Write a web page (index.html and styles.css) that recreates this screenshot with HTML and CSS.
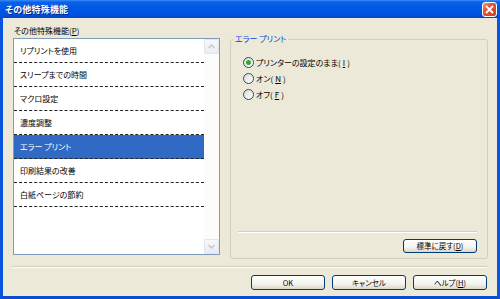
FILE: index.html
```html
<!DOCTYPE html>
<html lang="ja">

<head>
    <meta charset="UTF-8">
    <title>その他特殊機能</title>
    <link rel="stylesheet" href="styles.css">
</head>

<body>
    <div class="window">
        <div class="titlebar">
            <span class="title">その他特殊機能</span>
            <button class="close" aria-label="閉じる">
                <svg width="9" height="9" viewBox="0 0 9 9">
                    <path d="M1 1 L8 8 M8 1 L1 8" stroke="#fff" stroke-width="1.8" />
                </svg>
            </button>
        </div>

        <div class="frame">
            <div class="main">
                <div class="left">
                    <div class="label">その他特殊機能(<u>P</u>)</div>
                    <div class="listbox">
                        <ul class="items">
                            <li>リプリントを使用</li>
                            <li>スリープまでの時間</li>
                            <li>マクロ設定</li>
                            <li>濃度調整</li>
                            <li class="selected">エラー プリント</li>
                            <li>印刷結果の改善</li>
                            <li>白紙ページの節約</li>
                        </ul>
                        <div class="scrollbar">
                            <div class="arrow">
                                <svg width="7" height="5" viewBox="0 0 7 5"><path d="M0.5 4 L3.5 1 L6.5 4" fill="none" stroke="#c3c7d1" stroke-width="1.4" /></svg>
                            </div>
                            <div class="track"></div>
                            <div class="arrow">
                                <svg width="7" height="5" viewBox="0 0 7 5"><path d="M0.5 1 L3.5 4 L6.5 1" fill="none" stroke="#c3c7d1" stroke-width="1.4" /></svg>
                            </div>
                        </div>
                    </div>
                </div>

                <div class="group">
                    <span class="group-title">エラー プリント</span>
                    <div class="options">
                        <label class="radio"><span class="dot checked"></span>プリンターの設定のまま(<u>I</u>)</label>
                        <label class="radio"><span class="dot"></span>オン(<u>N</u>)</label>
                        <label class="radio"><span class="dot"></span>オフ(<u>F</u>)</label>
                    </div>
                    <div class="group-bottom">
                        <div class="etched"></div>
                        <div class="row-right">
                            <button class="btn">標準に戻す(<u>D</u>)</button>
                        </div>
                    </div>
                </div>
            </div>

            <div class="footer">
                <div class="etched"></div>
                <div class="buttons">
                    <button class="btn wide">OK</button>
                    <button class="btn wide">キャンセル</button>
                    <button class="btn wide">ヘルプ(<u>H</u>)</button>
                </div>
            </div>
        </div>
    </div>
</body>

</html>
```

FILE: styles.css
```css
* {
    box-sizing: border-box;
}

body {
    margin: 0;
    font-family: "Noto Sans CJK JP", "Noto Sans", sans-serif;
    font-size: 8px;
    font-feature-settings: "palt";
    color: #000;
}

.window {
    width: 500px;
    height: 299px;
    display: flex;
    flex-direction: column;
    background: #ece9d8;
}

.titlebar {
    height: 18px;
    display: flex;
    align-items: center;
    justify-content: space-between;
    padding: 0 3px 0 5px;
    background: linear-gradient(#3d8ef8 0, #0a62ea 2px, #0058e6 40%, #0053df 80%, #0046c8 100%);
}

.title {
    color: #fff;
    font-weight: bold;
    font-size: 9px;
    letter-spacing: 0.2px;
    text-shadow: 1px 1px 0 #0a1e8a;
}

.close {
    width: 15px;
    height: 15px;
    padding: 0;
    border: 1px solid #fff;
    border-radius: 3px;
    background: linear-gradient(135deg, #f0a080 0, #e2583a 35%, #c8401e 100%);
    display: flex;
    align-items: center;
    justify-content: center;
}

.frame {
    flex: 1;
    display: flex;
    flex-direction: column;
    border-left: 3px solid #0a55e0;
    border-right: 3px solid #0a55e0;
    border-bottom: 3px solid #0a4dd0;
}

.main {
    height: 244px;
    display: flex;
    gap: 10px;
    padding-left: 10px;
}

.left {
    width: 207px;
    padding-top: 7px;
}

.label {
    height: 13px;
    line-height: 12px;
    padding-left: 1px;
}

u {
    text-decoration: underline;
}

.listbox {
    height: 217px;
    display: flex;
    background: #fff;
    border: 1px solid #7f9db9;
}

.items {
    flex: 1;
    list-style: none;
    margin: 0;
    padding: 0;
}

.items li {
    height: 24px;
    line-height: 23px;
    padding-left: 6px;
    border-bottom: 1px dashed #222;
}

.items li.selected {
    background: #316ac5;
    color: #fff;
}

.scrollbar {
    width: 15px;
    display: flex;
    flex-direction: column;
    background: #fbfbf9;
}

.arrow {
    height: 15px;
    display: flex;
    align-items: center;
    justify-content: center;
    background: linear-gradient(#f7f8fa, #e9ecf1);
    border: 1px solid #e1e5ec;
    border-radius: 2px;
}

.track {
    flex: 1;
    background: #fcfcfb;
}

.group {
    position: relative;
    width: 258px;
    height: 220px;
    margin-top: 21px;
    border: 1px solid #d0d0bf;
    border-radius: 3px;
    display: flex;
    flex-direction: column;
}

.group-title {
    position: absolute;
    top: -7px;
    left: 2px;
    padding: 0 2px;
    line-height: 12px;
    background: #ece9d8;
    color: #0046d5;
}

.options {
    padding: 14px 0 0 12px;
}

.radio {
    height: 16px;
    display: flex;
    align-items: center;
    gap: 2px;
}

.dot {
    width: 11px;
    height: 11px;
    border: 1px solid #1c5180;
    border-radius: 50%;
    background: linear-gradient(135deg, #dcd9cf, #fff);
    display: flex;
    align-items: center;
    justify-content: center;
}

.dot.checked::after {
    content: "";
    width: 5px;
    height: 5px;
    border-radius: 50%;
    background: #2fa82f;
}

.group-bottom {
    margin-top: auto;
    padding: 0 10px 5px 7px;
}

.etched {
    height: 2px;
    border-top: 1px solid #d0d0bf;
    border-bottom: 1px solid #fff;
}

.row-right {
    display: flex;
    justify-content: flex-end;
    padding-top: 6px;
}

.btn {
    width: 74px;
    height: 14px;
    padding: 0;
    font-family: inherit;
    font-size: 7.5px;
    font-feature-settings: "palt";
    line-height: 12px;
    color: #000;
    border: 1px solid #003c74;
    border-radius: 3px;
    background: linear-gradient(#fff 0, #f4f3ee 60%, #dcd8c8 100%);
}

.footer {
    padding: 4px 10px 0 10px;
}

.buttons {
    display: flex;
    justify-content: flex-end;
    gap: 7px;
    padding-top: 7px;
}

.btn.wide {
    height: 15px;
}
```
